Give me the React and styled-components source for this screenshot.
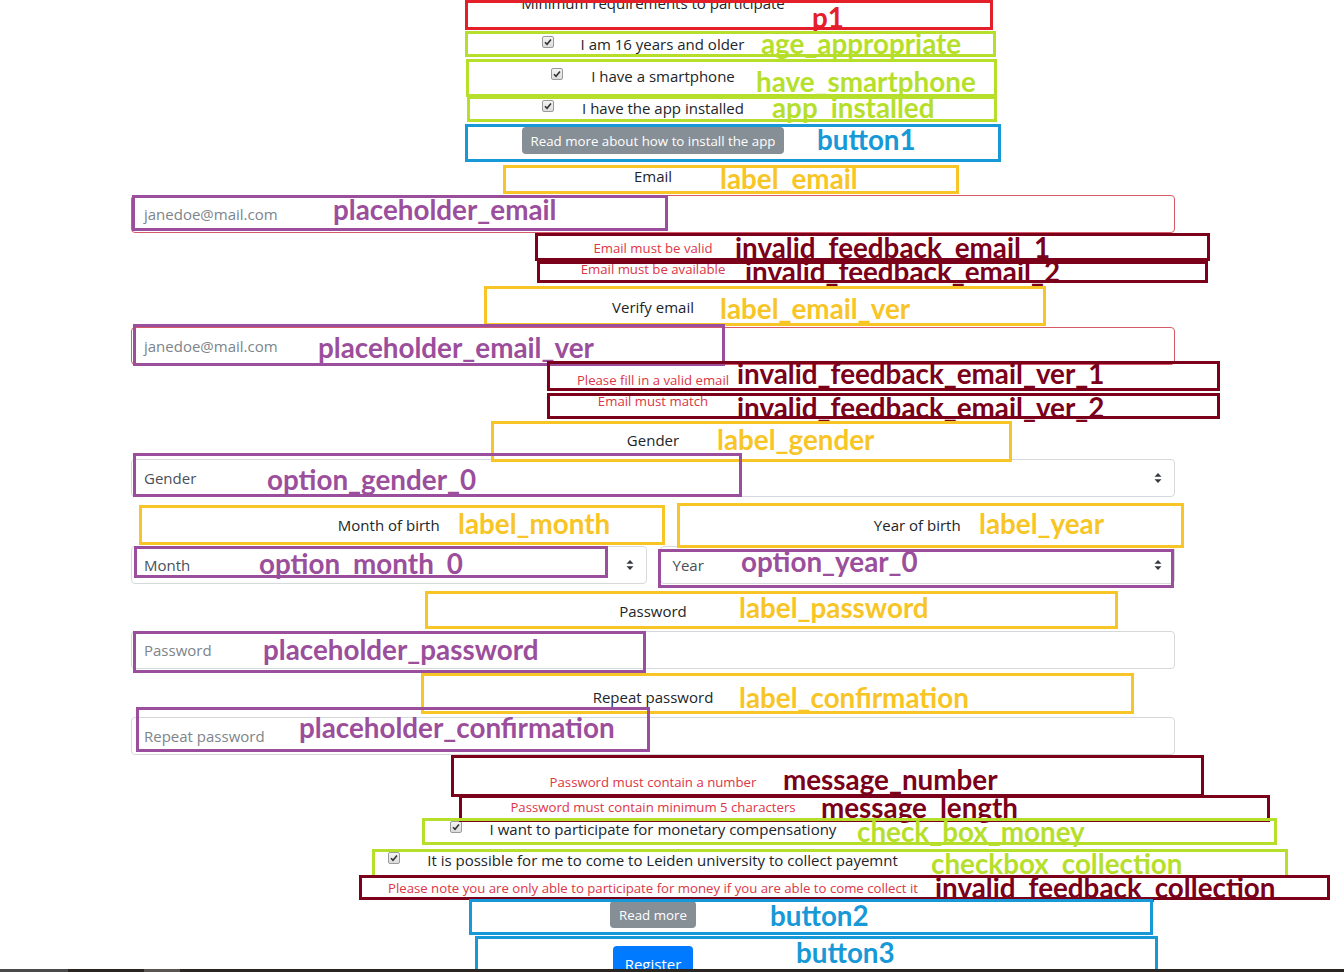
import React from "react"
import styled, { createGlobalStyle } from "styled-components"

const GlobalStyle = createGlobalStyle`
  html, body {
    margin: 0;
    padding: 0;
    background: #fff;
  }
  body {
    font-family: "Open Sans", "Noto Sans", sans-serif;
    color: #212529;
    overflow: hidden;
  }
`

const Page = styled.div`
  position: relative;
  width: 1344px;
  height: 972px;
  overflow: hidden;
`

const Form = styled.div`
  display: flex;
  flex-direction: column;
  width: 1044px;
  margin: -7px 0 0 131px;
  font-size: 15px;
`

const Intro = styled.p`
  margin: 0;
  text-align: center;
  line-height: 20px;
`

const CheckRow = styled.label`
  display: flex;
  justify-content: center;
  align-items: center;
  gap: ${(p) => p.$gap || 26}px;
  height: 20px;
  padding-right: 20px;
  margin-top: ${(p) => p.$mt}px;
`

const Tick = styled.span`
  box-sizing: border-box;
  width: 12px;
  height: 12px;
  border: 1px solid #9a9a9a;
  border-radius: 2px;
  background: linear-gradient(#f4f4f4, #dcdcdc);
  display: flex;
  align-items: center;
  justify-content: center;
  margin-top: -4px;
`

const Button = styled.button`
  align-self: center;
  height: ${(p) => (p.$primary ? 36 : 27)}px;
  padding: 0 ${(p) => (p.$primary ? 12 : 9)}px;
  margin-top: ${(p) => p.$mt}px;
  border: none;
  border-radius: 4px;
  font-family: inherit;
  font-size: ${(p) => (p.$primary ? 15 : 13.3)}px;
  color: #fff;
  background: ${(p) => (p.$primary ? "#007bff" : "#868e96")};
`

const FieldLabel = styled.div`
  text-align: center;
  line-height: 20px;
  margin-top: ${(p) => p.$mt}px;
`

const Input = styled.div`
  box-sizing: border-box;
  height: 38px;
  margin-top: ${(p) => p.$mt || 9}px;
  padding: 0 12px;
  display: flex;
  align-items: center;
  justify-content: space-between;
  border: 1px solid ${(p) => (p.$invalid ? "#d65a68" : "#d6d9dc")};
  border-radius: 4px;
  color: ${(p) => (p.$value ? "#495057" : "#7d848a")};
`

const Feedback = styled.div`
  text-align: center;
  font-size: 13.2px;
  line-height: 16px;
  color: #dc3545;
  margin-top: ${(p) => p.$mt}px;
`

const Columns = styled.div`
  display: grid;
  grid-template-columns: 1fr 1fr;
  gap: 13px;
  margin-top: 18px;
`

const Column = styled.div`
  display: flex;
  flex-direction: column;
`

const BottomBar = styled.div`
  position: fixed;
  left: 0;
  right: 0;
  bottom: 0;
  height: 3px;
  background: linear-gradient(90deg, #4a4a4a 0 68px, #2b2521 68px 144px, #5a5550 144px 180px, #2b2521 180px);
`

const Outline = styled.div`
  position: absolute;
  box-sizing: border-box;
  left: ${(p) => p.$x}px;
  top: ${(p) => p.$y}px;
  width: ${(p) => p.$w}px;
  height: ${(p) => p.$h}px;
  border: 3px solid ${(p) => p.$color};
  pointer-events: none;
`

const Tag = styled.span`
  position: absolute;
  left: ${(p) => p.$x}px;
  top: ${(p) => p.$cy - 16}px;
  line-height: 32px;
  font-family: Lato, "Open Sans", sans-serif;
  font-weight: 700;
  font-size: 27.8px;
  white-space: nowrap;
  color: ${(p) => p.$color};
`

const RED = "#e3202a"
const LIME = "#b6df2c"
const BLUE = "#1798d7"
const YELLOW = "#f7c526"
const PURPLE = "#9b4e9b"
const WINE = "#7b0019"

const annotations = [
  ["p1", RED, 465, 0, 993, 30, 812, 18],
  ["age_appropriate", LIME, 465, 31, 996, 57, 761, 44],
  ["have_smartphone", LIME, 466, 59, 997, 97, 756, 82],
  ["app_installed", LIME, 467, 96, 997, 122, 772, 108],
  ["button1", BLUE, 465, 124, 1001, 162, 817, 140],
  ["label_email", YELLOW, 503, 165, 959, 194, 720, 179],
  ["placeholder_email", PURPLE, 132, 195, 668, 231, 333, 210],
  ["invalid_feedback_email_1", WINE, 535, 233, 1210, 261, 735, 248],
  ["invalid_feedback_email_2", WINE, 537, 261, 1208, 283, 745, 272],
  ["label_email_ver", YELLOW, 484, 286, 1046, 326, 720, 309],
  ["placeholder_email_ver", PURPLE, 133, 324, 725, 366, 318, 348],
  ["invalid_feedback_email_ver_1", WINE, 547, 361, 1220, 391, 737, 374],
  ["invalid_feedback_email_ver_2", WINE, 547, 393, 1220, 419, 737, 408],
  ["label_gender", YELLOW, 491, 421, 1012, 462, 717, 440],
  ["option_gender_0", PURPLE, 133, 453, 742, 497, 267, 480],
  ["label_month", YELLOW, 139, 505, 665, 545, 458, 524],
  ["label_year", YELLOW, 677, 503, 1184, 548, 979, 524],
  ["option_month_0", PURPLE, 134, 546, 608, 578, 259, 564],
  ["option_year_0", PURPLE, 658, 549, 1174, 588, 741, 562],
  ["label_password", YELLOW, 425, 591, 1118, 629, 739, 608],
  ["placeholder_password", PURPLE, 133, 631, 646, 673, 263, 650],
  ["label_confirmation", YELLOW, 421, 673, 1134, 714, 739, 698],
  ["placeholder_confirmation", PURPLE, 136, 707, 650, 752, 299, 728],
  ["message_number", WINE, 451, 755, 1204, 797, 783, 780],
  ["message_length", WINE, 459, 795, 1270, 822, 821, 808],
  ["check_box_money", LIME, 422, 818, 1277, 845, 857, 832],
  ["checkbox_collection", LIME, 372, 849, 1288, 878, 931, 864],
  ["invalid_feedback_collection", WINE, 359, 875, 1330, 900, 935, 888],
  ["button2", BLUE, 469, 899, 1153, 935, 770, 916],
  ["button3", BLUE, 475, 936, 1158, 980, 796, 953],
]

const Check = () => (
  <Tick>
    <svg width="8" height="8" viewBox="0 0 8 8">
      <path d="M1 4.2 L3 6.2 L7 1.5" fill="none" stroke="#333" strokeWidth="1.6" />
    </svg>
  </Tick>
)

const Arrows = () => (
  <svg width="8" height="10" viewBox="0 0 8 10">
    <path d="M4 0 L7.5 3.8 H0.5 Z M4 10 L7.5 6.2 H0.5 Z" fill="#343a40" />
  </svg>
)

const App = () => (
  <Page>
    <GlobalStyle />
    <Form>
      <Intro>Minimum requirements to participate</Intro>
      <CheckRow $mt={21} $gap={27}><Check />I am 16 years and older</CheckRow>
      <CheckRow $mt={12} $gap={28}><Check />I have a smartphone</CheckRow>
      <CheckRow $mt={12} $gap={28}><Check />I have the app installed</CheckRow>
      <Button $mt={9}>Read more about how to install the app</Button>

      <FieldLabel $mt={12}>Email</FieldLabel>
      <Input $invalid>janedoe@mail.com</Input>
      <Feedback $mt={7}>Email must be valid</Feedback>
      <Feedback $mt={5}>Email must be available</Feedback>

      <FieldLabel $mt={20}>Verify email</FieldLabel>
      <Input $invalid $mt={10}>janedoe@mail.com</Input>
      <Feedback $mt={7}>Please fill in a valid email</Feedback>
      <Feedback $mt={5}>Email must match</Feedback>

      <FieldLabel $mt={21}>Gender</FieldLabel>
      <Input $value>Gender<Arrows /></Input>

      <Columns>
        <Column>
          <FieldLabel $mt={0}>Month of birth</FieldLabel>
          <Input $value $mt={11}>Month<Arrows /></Input>
        </Column>
        <Column>
          <FieldLabel $mt={0}>Year of birth</FieldLabel>
          <Input $value $mt={11}>Year<Arrows /></Input>
        </Column>
      </Columns>

      <FieldLabel $mt={17}>Password</FieldLabel>
      <Input $mt={10}>Password</Input>
      <FieldLabel $mt={18}>Repeat password</FieldLabel>
      <Input $mt={10}>Repeat password</Input>

      <Feedback $mt={19}>Password must contain a number</Feedback>
      <Feedback $mt={9}>Password must contain minimum 5 characters</Feedback>

      <CheckRow $mt={4} $gap={28}><Check />I want to participate for monetary compensationy</CheckRow>
      <CheckRow $mt={11} $gap={27}><Check />It is possible for me to come to Leiden university to collect payemnt</CheckRow>
      <Feedback $mt={10}>Please note you are only able to participate for money if you are able to come collect it</Feedback>

      <Button $mt={5}>Read more</Button>
      <Button $mt={18} $primary>Register</Button>
    </Form>

    {annotations.map(([name, color, x1, y1, x2, y2, lx, ly]) => (
      <React.Fragment key={name}>
        <Outline $color={color} $x={x1} $y={y1} $w={x2 - x1} $h={y2 - y1} />
        <Tag $color={color} $x={lx} $cy={ly}>{name}</Tag>
      </React.Fragment>
    ))}
    <BottomBar />
  </Page>
)

export default App
